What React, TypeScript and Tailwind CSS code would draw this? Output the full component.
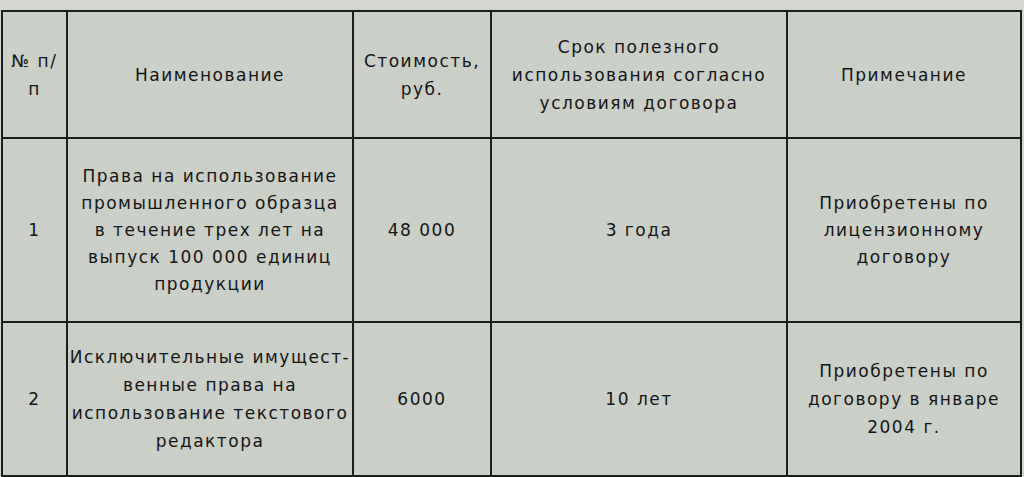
const cell =
  "border-2 border-[#1b1d1b] bg-[#cacfc8] text-center align-middle p-0";

function Lines({ lines }: { lines: string[] }) {
  return (
    <>
      {lines.map((l, i) => (
        <div key={i} className="whitespace-nowrap">
          {l}
        </div>
      ))}
    </>
  );
}

const header = [
  ["№ п/", "п"],
  ["Наименование"],
  ["Стоимость,", "руб."],
  ["Срок полезного", "использования согласно", "условиям договора"],
  ["Примечание"],
];

const rows = [
  {
    h: "h-[184px]",
    lh: "leading-[27px]",
    cells: [
      ["1"],
      [
        "Права на использование",
        "промышленного образца",
        "в течение трех лет на",
        "выпуск 100 000 единиц",
        "продукции",
      ],
      ["48 000"],
      ["3 года"],
      ["Приобретены по", "лицензионному", "договору"],
    ],
  },
  {
    h: "h-[154px]",
    lh: "leading-[28px]",
    cells: [
      ["2"],
      [
        "Исключительные имущест-",
        "венные права на",
        "использование текстового",
        "редактора",
      ],
      ["6000"],
      ["10 лет"],
      ["Приобретены по", "договору в январе", "2004 г."],
    ],
  },
];

export default function App() {
  return (
    <div className="w-[1024px] h-[477px] overflow-hidden bg-[#d4d6d1] pt-[10px] pl-[1px] font-['DejaVu_Sans',sans-serif] text-[17px] leading-[27px] tracking-[1.5px] text-[#141514]">
      <table className="table-fixed border-collapse w-[1019px]">
        <colgroup>
          <col className="w-[65px]" />
          <col className="w-[286px]" />
          <col className="w-[138px]" />
          <col className="w-[296px]" />
          <col className="w-[234px]" />
        </colgroup>
        <thead>
          <tr className="h-[127px]">
            {header.map((c, i) => (
              <th key={i} className={cell + " font-normal leading-[28px]"}>
                <Lines lines={c} />
              </th>
            ))}
          </tr>
        </thead>
        <tbody>
          {rows.map((r, ri) => (
            <tr key={ri} className={r.h}>
              {r.cells.map((c, i) => (
                <td key={i} className={cell + " " + r.lh}>
                  <Lines lines={c} />
                </td>
              ))}
            </tr>
          ))}
        </tbody>
      </table>
    </div>
  );
}
